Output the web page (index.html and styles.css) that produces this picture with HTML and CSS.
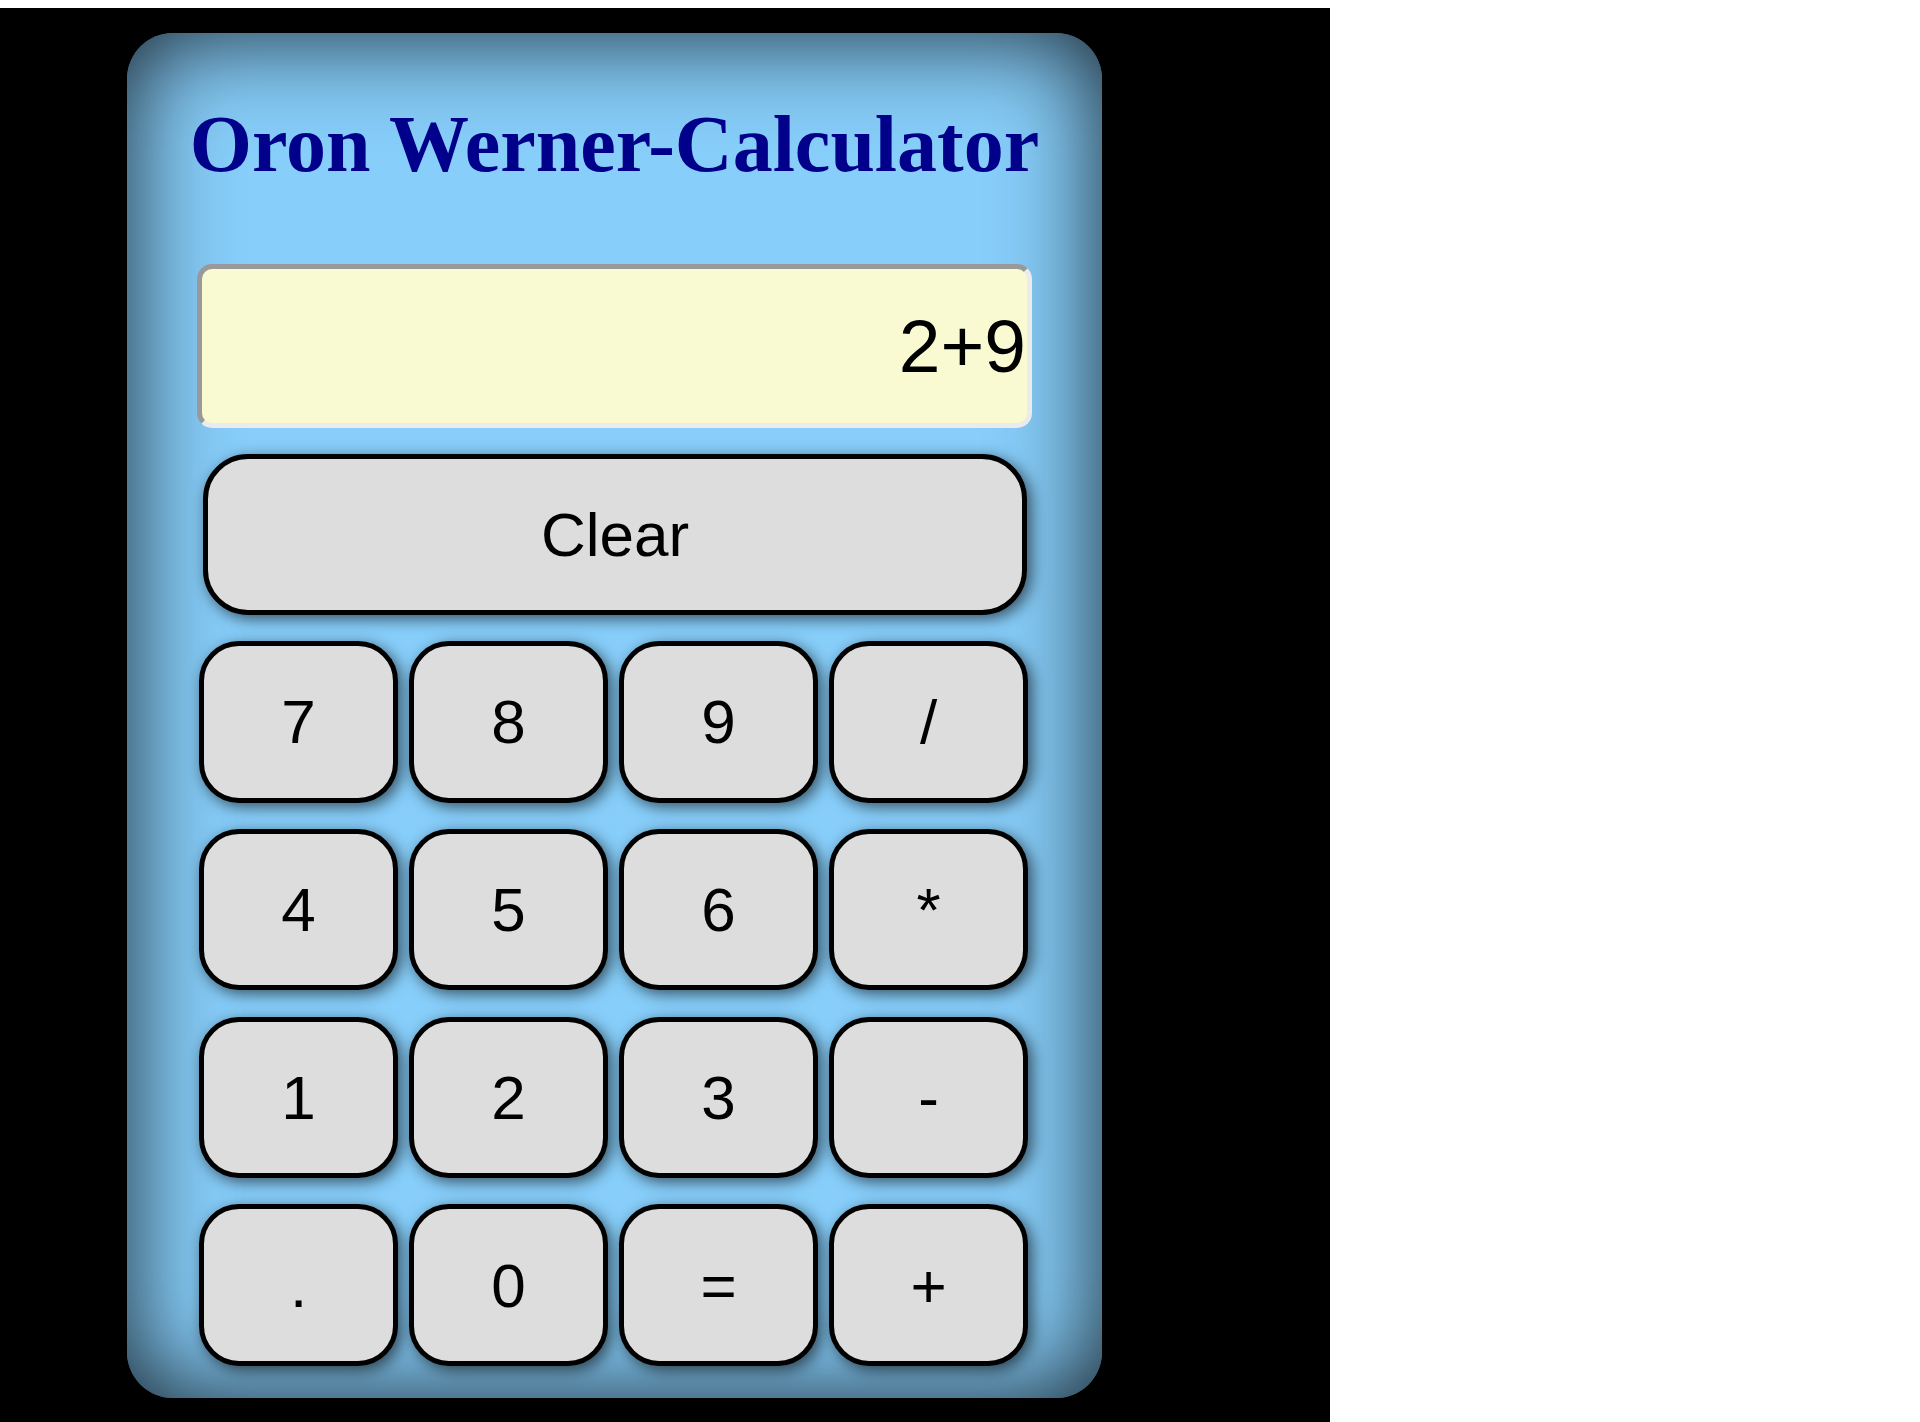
FILE: index.html
```html
<!DOCTYPE html>
<html lang="en">
<head>
<meta charset="utf-8">
<title>Oron Werner-Calculator</title>
<link rel="stylesheet" href="styles.css">
</head>
<body>
<div class="stage">
  <div class="calculator">
    <h1 class="title">Oron Werner-Calculator</h1>
    <input class="display" type="text" value="2+9" readonly>
    <button class="key clear">Clear</button>
    <div class="keypad">
      <button class="key">7</button>
      <button class="key">8</button>
      <button class="key">9</button>
      <button class="key">/</button>
      <button class="key">4</button>
      <button class="key">5</button>
      <button class="key">6</button>
      <button class="key">*</button>
      <button class="key">1</button>
      <button class="key">2</button>
      <button class="key">3</button>
      <button class="key">-</button>
      <button class="key">.</button>
      <button class="key">0</button>
      <button class="key">=</button>
      <button class="key">+</button>
    </div>
  </div>
</div>
</body>
</html>
```

FILE: styles.css
```css
html {
  background: #ffffff;
}

body {
  margin: 0;
  padding-top: 8px;
  background: #ffffff;
}

.stage {
  width: 1330px;
  height: 1414px;
  background: #000000;
  padding: 25px 0 0 127px;
  box-sizing: border-box;
}

.calculator {
  width: 975px;
  height: 1365px;
  box-sizing: border-box;
  padding-top: 72px;
  background: #87cefa;
  border-radius: 46px;
  box-shadow: inset 0 0 100px rgba(0, 0, 0, 0.85);
  display: flex;
  flex-direction: column;
}

.title {
  margin: 0;
  text-align: center;
  font-family: "Liberation Serif", "Times New Roman", serif;
  font-weight: bold;
  font-size: 80px;
  line-height: 79px;
  color: #00008b;
}

.display {
  margin: 80px 0 0 70px;
  width: 835px;
  height: 164px;
  box-sizing: border-box;
  border-width: 5px;
  border-style: solid;
  border-color: #999999 #ebebeb #ebebeb #999999;
  border-radius: 15px;
  background: #fafad2;
  font-family: "Liberation Sans", Arial, sans-serif;
  font-size: 75px;
  color: #000000;
  text-align: right;
  padding: 0 1px 0 0;
  outline: none;
}

.key {
  background: #dddddd;
  border: 5px solid #000000;
  border-radius: 40px;
  box-sizing: border-box;
  font-family: "Liberation Sans", Arial, sans-serif;
  font-size: 62px;
  color: #000000;
  padding: 0;
  box-shadow: 4px 4px 15px rgba(0, 0, 0, 0.6);
}

.clear {
  margin: 26px 0 0 76px;
  width: 824px;
  height: 161px;
  border-radius: 45px;
}

.keypad {
  margin: 26px 0 0 72px;
  width: 829px;
  display: grid;
  grid-template-columns: repeat(4, 199px);
  grid-auto-rows: 161.5px;
  column-gap: 11px;
  row-gap: 26.3px;
}
```
